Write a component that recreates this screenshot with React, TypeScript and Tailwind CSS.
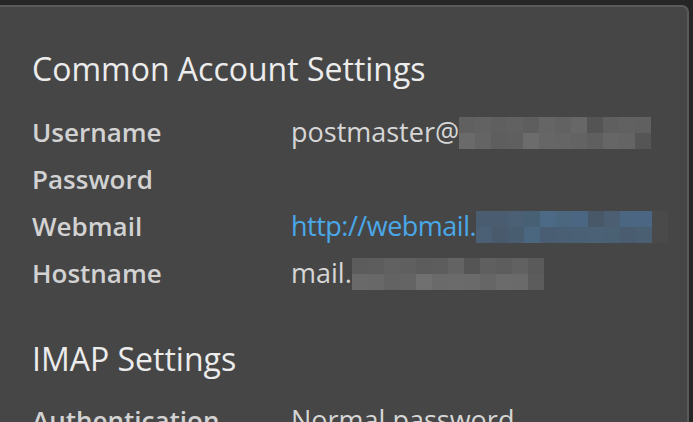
import React from 'react';

const userBlur = [
  ['#606060', '#626262', '#5f5f5f', '#616161', '#5e5e5e', '#656565', '#626262', '#676767', '#545454', '#5f5f5f', '#616161', '#606060'],
  ['#6a6a6a', '#646464', '#5e5e5e', '#5f5f5f', '#6c6c6c', '#666666', '#656565', '#636363', '#5f5f5f', '#666666', '#646464', '#555555'],
];

const webBlur = [
  ['#4a5d70', '#4a5d70', '#4b6075', '#486073', '#4c6a85', '#4b6780', '#4a6682', '#495868', '#4b5e72', '#4a6680', '#4b6682', '#4a4a4a'],
  ['#4b6075', '#485a6c', '#495d70', '#4b6780', '#495e72', '#4a5f73', '#4a6075', '#4b6176', '#4a6073', '#4a5d70', '#4b5f73', '#4a4a4a'],
];

const hostBlur = [
  ['#5c5c5c', '#5d5d5d', '#616161', '#5f5f5f', '#5c5c5c', '#5d5d5d', '#636363', '#555555', '#5f5f5f', '#5d5d5d', '#616161', '#5a5a5a'],
  ['#696969', '#686868', '#636363', '#646464', '#707070', '#6a6a6a', '#6b6b6b', '#6a6a6a', '#666666', '#6b6b6b', '#6a6a6a', '#5c5c5c'],
];

// pixelated (redacted) part of a value
const Blur = ({ rows }: { rows: string[][] }) => (
  <span className="inline-flex flex-col">
    {rows.map((row, i) => (
      <span key={i} className="flex">
        {row.map((c, j) => (
          <span key={j} className="block h-4 w-4" style={{ backgroundColor: c }} />
        ))}
      </span>
    ))}
  </span>
);

const rows = [
  { label: 'Username', value: <><span>postmaster@</span><Blur rows={userBlur} /></> },
  { label: 'Password', value: null },
  { label: 'Webmail', value: <><span className="tracking-[-0.5px] text-[#4aa8e8]">http://webmail.</span><Blur rows={webBlur} /></> },
  { label: 'Hostname', value: <><span>mail.</span><Blur rows={hostBlur} /></> },
];

const App = () => {
  return (
    <div className="h-[422px] w-[693px] overflow-hidden bg-[#262626] pt-[5px] font-['Open_Sans',sans-serif]">
      <div className="h-[500px] w-[689px] rounded-tr-[7px] border-t-2 border-r-2 border-[#5a5a5a] bg-[#464646] pl-8 pt-[38px]">
        <h2 className="text-[32px] leading-[48px] text-[#ececec]">Common Account Settings</h2>
        <div className="mt-[16px]">
          {rows.map((r) => (
            <div key={r.label} className="flex h-[47px] items-center">
              <div className="w-[259px] text-[26px] font-semibold text-[#d2d2d2]">{r.label}</div>
              <div className="flex items-center text-[27px] text-[#d6d6d6]">{r.value}</div>
            </div>
          ))}
        </div>
        <h2 className="mt-[38px] text-[32px] leading-[48px] text-[#ececec]">IMAP Settings</h2>
        <div className="mt-[14px] flex h-[47px] items-center">
          <div className="w-[259px] text-[26px] font-semibold text-[#d2d2d2]">Authentication</div>
          <div className="text-[27px] text-[#d6d6d6]">Normal password</div>
        </div>
      </div>
    </div>
  );
};

export default App;
